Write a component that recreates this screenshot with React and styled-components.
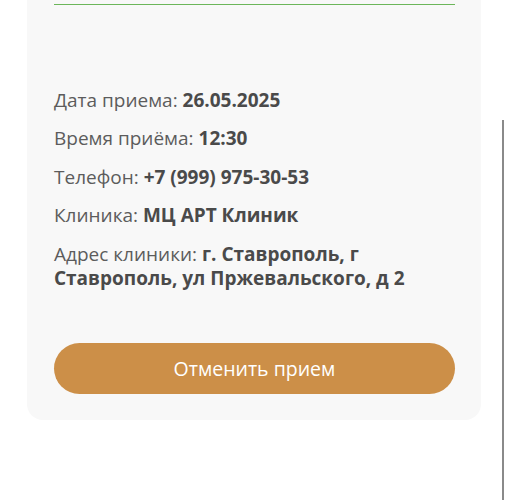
import React from "react";
import styled, { createGlobalStyle } from "styled-components";

const GlobalStyle = createGlobalStyle`
  html, body {
    margin: 0;
    padding: 0;
    background: #ffffff;
    font-family: "Open Sans", "Noto Sans", sans-serif;
  }
`;

const Page = styled.div`
  position: relative;
  width: 509px;
  height: 500px;
  overflow: hidden;
  background: #ffffff;
`;

const Card = styled.div`
  margin: -30px 28px 0 27px;
  padding: 0 26px 26px 27px;
  background: #f8f8f8;
  border-radius: 0 0 16px 16px;
`;

const InputLine = styled.div`
  height: 34px;
  border-bottom: 1.5px solid #6cb65a;
`;

const InfoList = styled.div`
  display: flex;
  flex-direction: column;
  gap: 14.5px;
  padding-top: 82.5px;
`;

const InfoRow = styled.div`
  font-size: 19px;
  line-height: 24px;
  color: #5c5c5c;
`;

const Value = styled.span`
  font-weight: 700;
  color: #4a4a4a;
`;

const CancelButton = styled.button`
  display: flex;
  align-items: center;
  justify-content: center;
  width: 100%;
  height: 51px;
  margin-top: 53px;
  border: none;
  border-radius: 26px;
  background: #cc8f48;
  color: #ffffff;
  font-family: "Open Sans", "Noto Sans", sans-serif;
  font-size: 19.5px;
  cursor: pointer;
`;

const ScrollThumb = styled.div`
  position: absolute;
  right: 5px;
  top: 120px;
  width: 2px;
  height: 380px;
  background: #8a8a8a;
`;

const rows = [
  ["Дата приема:", "26.05.2025"],
  ["Время приёма:", "12:30"],
  ["Телефон:", "+7 (999) 975-30-53"],
  ["Клиника:", "МЦ АРТ Клиник"],
  ["Адрес клиники:", "г. Ставрополь, г Ставрополь, ул Пржевальского, д 2"],
];

export default function App() {
  return (
    <Page>
      <GlobalStyle />
      <Card>
        <InputLine />
        <InfoList>
          {rows.map(([label, value]) => (
            <InfoRow key={label}>
              {label} <Value>{value}</Value>
            </InfoRow>
          ))}
        </InfoList>
        <CancelButton>Отменить прием</CancelButton>
      </Card>
      <ScrollThumb />
    </Page>
  );
}
